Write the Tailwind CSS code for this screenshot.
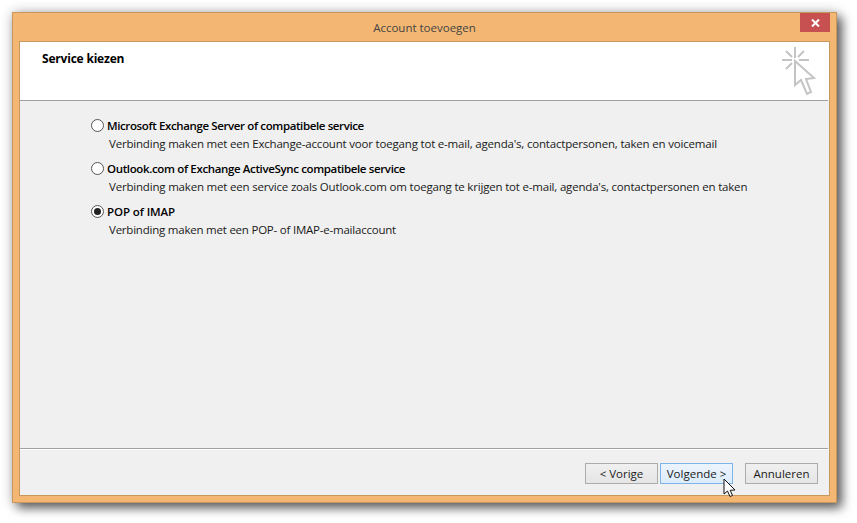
<!DOCTYPE html>
<html lang="en">
<head>
    <meta charset="UTF-8">
    <script src="https://cdn.jsdelivr.net/npm/@tailwindcss/browser@4"></script>
    <title>Account toevoegen</title>
</head>
<body class="bg-white w-[857px] h-[523px] overflow-hidden font-['Open_Sans',sans-serif] text-[11.5px] text-[#1a1a1a]">
    <div class="ml-[12px] mt-[12px] w-[825px] h-[491px] flex flex-col border border-[#c8975c] bg-[#f3b773] shadow-[0_0_12px_rgba(0,0,0,0.22),5px_5px_10px_rgba(0,0,0,0.6)] px-[6px] pb-[6px]">
        <!-- title bar -->
        <div class="relative h-[28px] shrink-0 flex items-center justify-center text-[#444] pt-[1px]">
            Account toevoegen
            <div class="absolute right-[0px] top-0 w-[30px] h-[19px] bg-[#c75050] flex items-center justify-center">
                <svg width="9" height="8" viewBox="0 0 9 8"><path d="M1 0.5 L8 7.5 M8 0.5 L1 7.5" stroke="#fff" stroke-width="2" fill="none"/></svg>
            </div>
        </div>
        <div class="flex-1 flex flex-col bg-[#f0f0f0] border border-[#c8975c]">
            <!-- header -->
            <div class="h-[58px] shrink-0 bg-white flex justify-between pl-[22px] pr-[11px]">
                <div class="font-bold text-[12px] text-black pt-[8px] leading-[17px] tracking-[-0.2px]">Service kiezen</div>
                <svg class="mt-[5px]" width="36" height="50" viewBox="0 0 36 50" fill="none" stroke="#c4c4c4">
                    <path d="M13 0 V11 M0 13 H10 M17 13 H27 M4 4 L10 10 M22 4 L16 10 M4 22 L10 16" stroke-width="2"/>
                    <path d="M13 14 V38 L19 33 L25 47 L29 45 L24 32 L32 31 Z" stroke-width="2" fill="#fff"/>
                </svg>
            </div>
            <div class="h-[1px] shrink-0 bg-[#a0a0a0] mr-[1px]"></div>
            <!-- options -->
            <div class="flex-1 pl-[71px] pt-[16px] flex flex-col gap-[8px]">
                <div>
                    <div class="flex items-center h-[17px] gap-[3px]">
                        <span class="w-[13px] h-[13px] rounded-full border border-[#555] bg-white"></span>
                        <span class="font-semibold text-black tracking-[-0.38px]">Microsoft Exchange Server of compatibele service</span>
                    </div>
                    <div class="pl-[18px] mt-[1px] leading-[17px] tracking-[-0.19px]">Verbinding maken met een Exchange-account voor toegang tot e-mail, agenda's, contactpersonen, taken en voicemail</div>
                </div>
                <div>
                    <div class="flex items-center h-[17px] gap-[3px]">
                        <span class="w-[13px] h-[13px] rounded-full border border-[#555] bg-white"></span>
                        <span class="font-semibold text-black tracking-[-0.36px]">Outlook.com of Exchange ActiveSync compatibele service</span>
                    </div>
                    <div class="pl-[18px] mt-[1px] leading-[17px] tracking-[-0.19px]">Verbinding maken met een service zoals Outlook.com om toegang te krijgen tot e-mail, agenda's, contactpersonen en taken</div>
                </div>
                <div>
                    <div class="flex items-center h-[17px] gap-[3px]">
                        <span class="w-[13px] h-[13px] rounded-full border border-[#555] bg-white flex items-center justify-center"><span class="w-[7px] h-[7px] rounded-full bg-[#222]"></span></span>
                        <span class="font-semibold text-black tracking-[-0.1px]">POP of IMAP</span>
                    </div>
                    <div class="pl-[18px] mt-[1px] leading-[17px] tracking-[-0.22px]">Verbinding maken met een POP- of IMAP-e-mailaccount</div>
                </div>
            </div>
            <!-- footer -->
            <div class="h-[1px] shrink-0 bg-[#a0a0a0] mr-[1px]"></div>
            <div class="h-[1px] shrink-0 bg-white"></div>
            <div class="h-[45px] shrink-0 flex items-start justify-end pt-[13px] pr-[11px]">
                <button class="w-[73px] h-[21px] mr-[2px] border border-[#acacac] bg-gradient-to-b from-[#f0f0f0] to-[#e5e5e5] flex items-center justify-center">&lt; Vorige</button>
                <div class="relative mr-[12px]">
                    <button class="w-[73px] h-[21px] border border-[#7eb4ea] bg-gradient-to-b from-[#ecf4fc] to-[#dcecfc] flex items-center justify-center">Volgende &gt;</button>
                    <svg class="absolute left-[63px] top-[15px]" width="14" height="20" viewBox="0 0 14 20"><path d="M1 1 V16 L4.5 13 L7 18.5 L9.5 17.5 L7.2 12.3 L12 12 Z" fill="#fff" stroke="#111" stroke-width="1"/></svg>
                </div>
                <button class="w-[73px] h-[21px] border border-[#acacac] bg-gradient-to-b from-[#f0f0f0] to-[#e5e5e5] flex items-center justify-center">Annuleren</button>
            </div>
        </div>
    </div>
</body>
</html>
